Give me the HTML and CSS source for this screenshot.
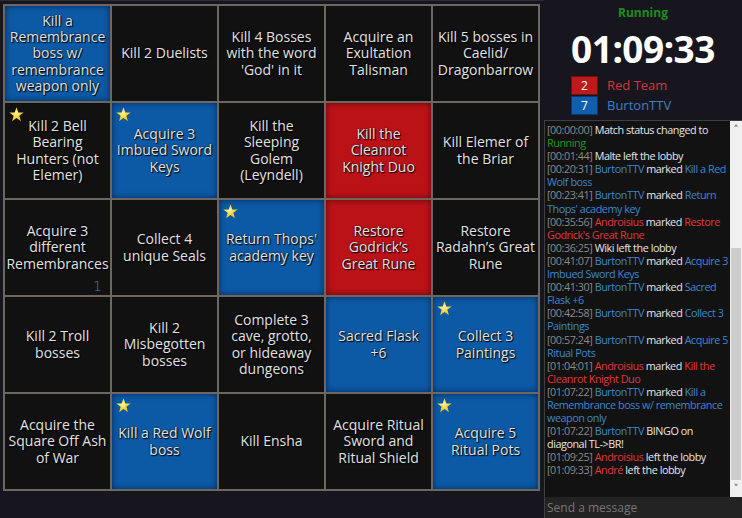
FILE: index.html
```html
<!DOCTYPE html>
<html>
<head>
<meta charset="utf-8">
<link rel="stylesheet" href="styles.css">
</head>
<body>
<div class="app">
  <div class="board-wrap">
    <div class="board">
      <div class="cell blue">Kill a Remembrance boss w/ remembrance weapon only</div>
      <div class="cell">Kill 2 Duelists</div>
      <div class="cell">Kill 4 Bosses with the word 'God' in it</div>
      <div class="cell">Acquire an Exultation Talisman</div>
      <div class="cell">Kill 5 bosses in Caelid/ Dragonbarrow</div>

      <div class="cell starred">Kill 2 Bell Bearing Hunters (not Elemer)</div>
      <div class="cell blue starred">Acquire 3 Imbued Sword Keys</div>
      <div class="cell">Kill the Sleeping Golem (Leyndell)</div>
      <div class="cell red">Kill the Cleanrot Knight Duo</div>
      <div class="cell">Kill Elemer of the Briar</div>

      <div class="cell">Acquire 3 different Remembrances<span class="count">1</span></div>
      <div class="cell">Collect 4 unique Seals</div>
      <div class="cell blue starred">Return Thops' academy key</div>
      <div class="cell red">Restore Godrick’s<br>Great Rune</div>
      <div class="cell">Restore Radahn’s Great Rune</div>

      <div class="cell">Kill 2 Troll bosses</div>
      <div class="cell">Kill 2 Misbegotten bosses</div>
      <div class="cell">Complete 3 cave, grotto,<br>or hideaway dungeons</div>
      <div class="cell blue">Sacred Flask<br>+6</div>
      <div class="cell blue starred">Collect 3 Paintings</div>

      <div class="cell">Acquire the Square Off Ash of War</div>
      <div class="cell blue starred">Kill a Red Wolf boss</div>
      <div class="cell">Kill Ensha</div>
      <div class="cell">Acquire Ritual Sword and Ritual Shield</div>
      <div class="cell blue starred">Acquire 5 Ritual Pots</div>
    </div>
  </div>

  <div class="side">
    <div class="status">Running</div>
    <div class="timer">01:09:33</div>
    <div class="teams">
      <div class="team"><span class="score score-red">2</span><span class="tname tred">Red Team</span></div>
      <div class="team"><span class="score score-blue">7</span><span class="tname tblue">BurtonTTV</span></div>
    </div>
    <div class="chat">
      <div class="log">
        <div class="msg"><span class="ts">[00:00:00]</span> Match status changed to <span class="g">Running</span></div>
        <div class="msg"><span class="ts">[00:01:44]</span> Malte left the lobby</div>
        <div class="msg"><span class="ts">[00:20:31]</span> <span class="b">BurtonTTV</span> marked <span class="b">Kill a Red Wolf boss</span></div>
        <div class="msg"><span class="ts">[00:23:41]</span> <span class="b">BurtonTTV</span> marked <span class="b">Return Thops' academy key</span></div>
        <div class="msg"><span class="ts">[00:35:56]</span> <span class="r">Androisius</span> marked <span class="r">Restore Godrick's Great Rune</span></div>
        <div class="msg"><span class="ts">[00:36:25]</span> Wiki left the lobby</div>
        <div class="msg"><span class="ts">[00:41:07]</span> <span class="b">BurtonTTV</span> marked <span class="b">Acquire 3 Imbued Sword Keys</span></div>
        <div class="msg"><span class="ts">[00:41:30]</span> <span class="b">BurtonTTV</span> marked <span class="b">Sacred Flask +6</span></div>
        <div class="msg"><span class="ts">[00:42:58]</span> <span class="b">BurtonTTV</span> marked <span class="b">Collect 3 Paintings</span></div>
        <div class="msg"><span class="ts">[00:57:24]</span> <span class="b">BurtonTTV</span> marked <span class="b">Acquire 5 Ritual Pots</span></div>
        <div class="msg"><span class="ts">[01:04:01]</span> <span class="r">Androisius</span> marked <span class="r">Kill the Cleanrot Knight Duo</span></div>
        <div class="msg"><span class="ts">[01:07:22]</span> <span class="b">BurtonTTV</span> marked <span class="b">Kill a Remembrance boss w/ remembrance weapon only</span></div>
        <div class="msg"><span class="ts">[01:07:22]</span> <span class="b">BurtonTTV</span> BINGO on diagonal TL-&gt;BR!</div>
        <div class="msg"><span class="ts">[01:09:25]</span> <span class="r">Androisius</span> left the lobby</div>
        <div class="msg"><span class="ts">[01:09:33]</span> <span class="r">André</span> left the lobby</div>
      </div>
      <div class="scrollbar">
        <div class="arrow">&#x02C4;</div>
        <div class="track"><div class="thumb"></div></div>
        <div class="arrow">&#x02C5;</div>
      </div>
    </div>
    <div class="input">Send a message</div>
  </div>
</div>
</body>
</html>
```

FILE: styles.css
```css
html, body {
  margin: 0;
  padding: 0;
}
body {
  background: #17161e;
  width: 742px;
  height: 518px;
  overflow: hidden;
}
.app {
  display: flex;
  height: 518px;
}
.board-wrap {
  width: 544px;
  padding: 3px 0 0 3px;
  box-sizing: border-box;
  border-top: 1px solid #2c2c33;
}
.board {
  display: grid;
  grid-template-columns: repeat(5, 105px);
  grid-template-rows: repeat(5, 95px);
  gap: 2px;
  padding: 2px;
  width: max-content;
  background: #6c675f;
}
.cell {
  position: relative;
  background: #111111;
  color: #e2e2e2;
  font-family: "Open Sans", "DejaVu Sans", sans-serif;
  font-size: 14px;
  line-height: 16.3px;
  text-align: center;
  display: flex;
  align-items: center;
  justify-content: center;
  padding: 0 2px;
  text-shadow: 1px 1px 1px #000, 0 0 2px rgba(0,0,0,0.8);
}
.cell.blue {
  background: #0c5aa6;
  box-shadow: inset 0 0 6px rgba(0, 20, 60, 0.7);
}
.cell.red {
  background: #bb1217;
  box-shadow: inset 0 0 6px rgba(60, 0, 0, 0.7);
}
.cell.starred::before {
  content: "";
  position: absolute;
  left: 4px;
  top: 4px;
  width: 15px;
  height: 15px;
  background: radial-gradient(circle at 45% 40%, #fff7a0 0%, #f6cf2a 45%, #d98a10 100%);
  clip-path: polygon(50% 2%, 62% 36%, 98% 37%, 69% 59%, 80% 95%, 50% 74%, 20% 95%, 31% 59%, 2% 37%, 38% 36%);
}
.count {
  position: absolute;
  right: 8px;
  bottom: 1px;
  color: #4f7db5;
  font-family: "DejaVu Sans", sans-serif;
  font-size: 14px;
  font-weight: 300;
  text-shadow: none;
}

.side {
  flex: 1;
  display: flex;
  flex-direction: column;
  min-width: 0;
}
.status {
  text-align: center;
  color: #1f8c1f;
  font-family: "Open Sans", sans-serif;
  font-weight: bold;
  font-size: 12px;
  line-height: 16px;
  margin-top: 5px;
}
.timer {
  text-align: center;
  color: #ffffff;
  font-family: "Noto Sans", "Open Sans", sans-serif;
  font-weight: bold;
  font-size: 37px;
  line-height: 44px;
  margin-top: 6px;
  letter-spacing: -0.5px;
}
.teams {
  display: flex;
  flex-direction: column;
  gap: 2px;
  padding-left: 27px;
  margin-top: 5px;
}
.team {
  display: flex;
  align-items: center;
  gap: 9px;
  height: 18px;
}
.score {
  width: 25px;
  height: 17px;
  border: 1px solid rgba(0,0,0,0.4);
  color: #fff;
  font-family: "Open Sans", sans-serif;
  font-size: 12px;
  line-height: 17px;
  text-align: center;
}
.score-red { background: #bd1a1a; }
.score-blue { background: #0f5fae; }
.tname {
  font-family: "Open Sans", sans-serif;
  font-size: 13px;
}
.tred { color: #d4363a; }
.tblue { color: #3c80c6; }

.chat {
  margin-top: 6px;
  flex: 1;
  display: flex;
  min-height: 0;
  border-top: 1px solid #3e3e44;
  border-left: 1px solid #3e3e44;
  background: #121212;
}
.log {
  flex: 1;
  padding: 2px 1px 0 2px;
  overflow: hidden;
  font-family: "Open Sans", sans-serif;
  font-size: 10.8px;
  letter-spacing: -0.45px;
  line-height: 13.1px;
  color: #e6e6e6;
}
.ts { color: #8a8a8a; }
.g { color: #1e9a1e; }
.b { color: #3f86cc; }
.r { color: #e0353a; }
.scrollbar {
  width: 12px;
  display: flex;
  flex-direction: column;
  background: #f0f0f0;
}
.arrow {
  height: 17px;
  color: #606060;
  font-family: "DejaVu Sans", sans-serif;
  font-size: 11px;
  line-height: 17px;
  text-align: center;
}
.track {
  flex: 1;
  display: flex;
  flex-direction: column;
  justify-content: flex-end;
}
.thumb {
  height: 232px;
  background: #cdcdcd;
  margin: 0 1px;
}
.input {
  height: 21px;
  background: #232323;
  border-left: 1px solid #3e3e44;
  color: #777777;
  font-family: "Open Sans", sans-serif;
  font-size: 12px;
  line-height: 21px;
  padding-left: 2px;
}
```
